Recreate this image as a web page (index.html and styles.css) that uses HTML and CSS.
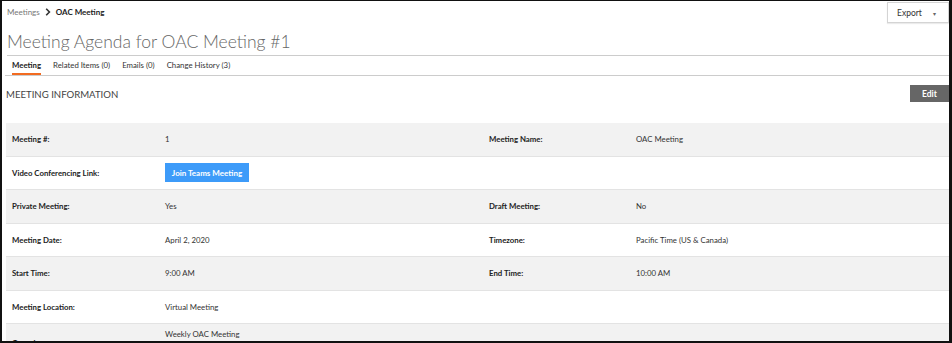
FILE: index.html
```html
<!DOCTYPE html>
<html>
<head>
    <title>Meeting Agenda</title>
    <link rel="stylesheet" href="styles.css">
</head>
<body>
    <div class="window">
        <div class="top-bar">
            <div class="breadcrumb">
                <span class="crumb">Meetings</span>
                <svg class="chevron" width="6" height="8" viewBox="0 0 6 8"><path d="M1.2 0.8 L4.4 4 L1.2 7.2" fill="none" stroke="#333" stroke-width="1.6"/></svg>
                <span class="crumb current">OAC Meeting</span>
            </div>
            <button class="export-btn">Export <span class="caret">&#9662;</span></button>
        </div>

        <h1 class="page-title">Meeting Agenda for OAC Meeting #1</h1>

        <div class="tabs">
            <span class="tab active">Meeting</span>
            <span class="tab">Related Items (0)</span>
            <span class="tab">Emails (0)</span>
            <span class="tab">Change History (3)</span>
        </div>

        <div class="section-head">
            <h2>MEETING INFORMATION</h2>
            <button class="edit-btn">Edit</button>
        </div>

        <div class="info-table">
            <div class="row shaded">
                <div class="label">Meeting #:</div>
                <div class="value">1</div>
                <div class="label">Meeting Name:</div>
                <div class="value">OAC Meeting</div>
            </div>
            <div class="row">
                <div class="label">Video Conferencing Link:</div>
                <div class="value"><button class="teams-btn">Join Teams Meeting</button></div>
                <div class="label"></div>
                <div class="value"></div>
            </div>
            <div class="row shaded">
                <div class="label">Private Meeting:</div>
                <div class="value">Yes</div>
                <div class="label">Draft Meeting:</div>
                <div class="value">No</div>
            </div>
            <div class="row">
                <div class="label">Meeting Date:</div>
                <div class="value">April 2, 2020</div>
                <div class="label">Timezone:</div>
                <div class="value">Pacific Time (US &amp; Canada)</div>
            </div>
            <div class="row shaded">
                <div class="label">Start Time:</div>
                <div class="value">9:00 AM</div>
                <div class="label">End Time:</div>
                <div class="value">10:00 AM</div>
            </div>
            <div class="row">
                <div class="label">Meeting Location:</div>
                <div class="value">Virtual Meeting</div>
                <div class="label"></div>
                <div class="value"></div>
            </div>
            <div class="row shaded tall">
                <div class="label">Overview:</div>
                <div class="value top">Weekly OAC Meeting</div>
                <div class="label"></div>
                <div class="value"></div>
            </div>
        </div>
    </div>
</body>
</html>
```

FILE: styles.css
```css
html, body {
    margin: 0;
    padding: 0;
    background: #fff;
}
body {
    font-family: Lato, "Open Sans", Arial, sans-serif;
    color: #222;
}
.window {
    box-sizing: border-box;
    width: 952px;
    height: 343px;
    border-style: solid;
    border-color: #111;
    border-width: 1px 3px 2px 2px;
    overflow: hidden;
    padding: 0 0 0 3px;
}
.top-bar {
    display: flex;
    justify-content: space-between;
    align-items: flex-start;
    padding-top: 1px;
}
.breadcrumb {
    display: flex;
    align-items: center;
    gap: 4px;
    font-size: 8px;
    padding: 5px 0 0 2px;
}
.crumb {
    color: #777;
}
.crumb.current {
    color: #222;
    font-weight: bold;
}
.chevron {
    margin: 0 1px;
}
.export-btn {
    font-family: inherit;
    font-size: 8.5px;
    color: #333;
    background: #fff;
    border: 1px solid #d4d4d4;
    height: 21px;
    width: 62px;
    padding: 0 0 0 9px;
    text-align: left;
    box-shadow: 0 1px 1px rgba(0,0,0,0.08);
}
.caret {
    font-size: 6px;
    color: #666;
    margin-left: 9px;
}
.page-title {
    font-weight: 300;
    font-size: 17.5px;
    color: #666;
    margin: 7px 0 0 2px;
    padding-bottom: 2px;
    border-bottom: 1px solid #ccc;
    line-height: 23px;
}
.tabs {
    display: flex;
    gap: 12px;
    font-size: 7.8px;
    padding: 4px 0 0 7px;
    border-bottom: 1px solid #ccc;
}
.tab {
    color: #333;
    padding-bottom: 3px;
    border-bottom: 2px solid transparent;
}
.tab.active {
    font-weight: bold;
    color: #222;
    border-bottom-color: #f26b21;
}
.section-head {
    display: flex;
    justify-content: space-between;
    align-items: flex-start;
    padding: 9px 0 0 1px;
    height: 38px;
}
.section-head h2 {
    margin: 4px 0 0 0;
    font-size: 9.6px;
    font-weight: normal;
    color: #444;
}
.edit-btn {
    font-family: inherit;
    font-weight: bold;
    font-size: 8.5px;
    color: #fff;
    background: #666;
    border: none;
    width: 39px;
    height: 17px;
    padding: 0;
}
.info-table {
    margin-left: 1px;
}
.row {
    display: grid;
    grid-template-columns: 159px 318px 153px 1fr;
    height: 32.5px;
    align-items: center;
    border-bottom: 1px solid #e3e3e3;
    font-size: 7.8px;
}
.row.shaded {
    background: #f2f2f2;
}
.row.tall {
    height: 37px;
}
.label {
    font-weight: bold;
    color: #222;
    padding-left: 6px;
}
.value {
    color: #333;
}
.value.top {
    align-self: start;
    padding-top: 5px;
}
.teams-btn {
    font-family: inherit;
    font-weight: bold;
    font-size: 8px;
    color: #fff;
    background: #3d9bf9;
    border: none;
    height: 19px;
    width: 84px;
    padding: 0;
}
```
